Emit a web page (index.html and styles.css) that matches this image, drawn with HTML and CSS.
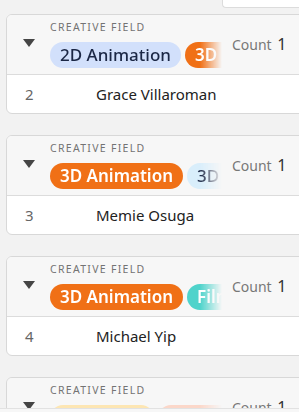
FILE: index.html
```html
<!DOCTYPE html>
<html lang="en">
<head>
    <meta charset="UTF-8">
    <meta name="viewport" content="width=device-width, initial-scale=1.0">
    <title>Creative Field Groups</title>
    <link rel="stylesheet" href="styles.css">
</head>
<body>
    <div class="toolbar">
        <div class="search-box"></div>
    </div>

    <div class="groups">
        <div class="group">
            <div class="group-head">
                <div class="caret"></div>
                <div class="field">
                    <div class="field-label">Creative Field</div>
                    <div class="pills">
                        <span class="pill pill-blue">2D Animation</span>
                        <span class="pill pill-orange">3D Animation</span>
                    </div>
                </div>
                <div class="count">Count <span class="count-num">1</span></div>
            </div>
            <div class="row">
                <span class="row-num">2</span>
                <span class="row-name">Grace Villaroman</span>
            </div>
        </div>

        <div class="group">
            <div class="group-head">
                <div class="caret"></div>
                <div class="field">
                    <div class="field-label">Creative Field</div>
                    <div class="pills">
                        <span class="pill pill-orange">3D Animation</span>
                        <span class="pill pill-sky">3D Modeling</span>
                    </div>
                </div>
                <div class="count">Count <span class="count-num">1</span></div>
            </div>
            <div class="row">
                <span class="row-num">3</span>
                <span class="row-name">Memie Osuga</span>
            </div>
        </div>

        <div class="group">
            <div class="group-head">
                <div class="caret"></div>
                <div class="field">
                    <div class="field-label">Creative Field</div>
                    <div class="pills">
                        <span class="pill pill-orange">3D Animation</span>
                        <span class="pill pill-teal">Film</span>
                    </div>
                </div>
                <div class="count">Count <span class="count-num">1</span></div>
            </div>
            <div class="row">
                <span class="row-num">4</span>
                <span class="row-name">Michael Yip</span>
            </div>
        </div>

        <div class="group">
            <div class="group-head">
                <div class="caret"></div>
                <div class="field">
                    <div class="field-label">Creative Field</div>
                    <div class="pills">
                        <span class="pill pill-yellow">Animation</span>
                        <span class="pill pill-peach">Art Direction</span>
                    </div>
                </div>
                <div class="count">Count <span class="count-num">1</span></div>
            </div>
        </div>
    </div>

    <div class="footer-bar"></div>
</body>
</html>
```

FILE: styles.css
```css
* {
    margin: 0;
    padding: 0;
    box-sizing: border-box;
}

body {
    font-family: 'Noto Sans', 'Open Sans', sans-serif;
    background: #f2f2f2;
    color: #222;
    overflow: hidden;
    height: 100vh;
}

.toolbar {
    display: flex;
    justify-content: flex-end;
    height: 8px;
}

.search-box {
    width: 77px;
    height: 8px;
    background: #fff;
    border: 1px solid #dcdcdc;
    border-top: none;
    border-right: none;
    border-bottom-left-radius: 4px;
}

.groups {
    padding: 6px 0 0 6px;
}

.group {
    width: 330px;
    border: 1px solid #d8d8d8;
    border-radius: 6px;
    overflow: hidden;
    background: #fff;
    margin-bottom: 21px;
}

.group-head {
    display: flex;
    height: 60px;
    background: #f7f7f7;
    border-bottom: 1px solid #dcdcdc;
}

.caret {
    width: 43px;
    display: flex;
    justify-content: center;
    padding-top: 24px;
}

.caret::before {
    content: "";
    width: 0;
    height: 0;
    border-left: 6px solid transparent;
    border-right: 6px solid transparent;
    border-top: 8px solid #454545;
}

.field {
    width: 172px;
    padding-top: 6px;
}

.field-label {
    font-size: 10.5px;
    letter-spacing: 1.3px;
    text-transform: uppercase;
    color: #737373;
    line-height: 12px;
    margin-bottom: 9px;
}

.pills {
    display: flex;
    gap: 4px;
    overflow: hidden;
    white-space: nowrap;
    -webkit-mask-image: linear-gradient(to right, #000 calc(100% - 22px), transparent 100%);
    mask-image: linear-gradient(to right, #000 calc(100% - 22px), transparent 100%);
}

.pill {
    display: inline-block;
    flex-shrink: 0;
    font-size: 17px;
    font-weight: 500;
    line-height: 26px;
    height: 26px;
    padding: 0 10px;
    border-radius: 13px;
}

.pill-blue {
    background: #d2e0fb;
    color: #1b2745;
}

.pill-orange {
    background: #f07016;
    color: #fff;
    font-weight: 600;
}

.pill-sky {
    background: #d9eefb;
    color: #1b2745;
}

.pill-teal {
    background: #4fd3cb;
    color: #fff;
    font-weight: 600;
}

.pill-yellow {
    background: #fde6b3;
    color: #5a4200;
}

.pill-peach {
    background: #fbd7c9;
    color: #6a2e12;
}

.count {
    padding: 18px 0 0 10px;
    font-size: 14px;
    color: #777;
    white-space: nowrap;
}

.count-num {
    font-size: 16px;
    color: #333;
    margin-left: 2px;
}

.row {
    display: flex;
    align-items: center;
    height: 38px;
    font-size: 15px;
}

.row-num {
    width: 89px;
    padding-left: 18px;
    color: #666;
}

.row-name {
    color: #222;
}

.footer-bar {
    position: fixed;
    left: 0;
    right: 0;
    bottom: 0;
    height: 4px;
    background: #f7f7f7;
    border-top: 1px solid #e2e2e2;
}
```
